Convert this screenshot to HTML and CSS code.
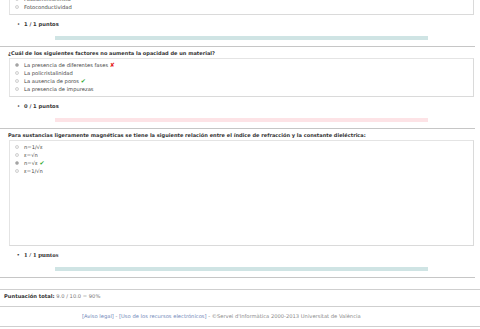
FILE: index.html
```html
<!DOCTYPE html>
<html lang="es">
  <head>
    <meta charset="UTF-8" />
    <meta name="viewport" content="width=device-width, initial-scale=1.0" />
    <title>Resultados</title>
    <link rel="stylesheet" href="styles.css">
  </head>
  <body>
    <div class="quiz">
      <div class="question first">
        <div class="options">
          <div class="option"><span class="radio"></span>Fotoluminiscencia</div>
          <div class="option"><span class="radio"></span>Fotoconductividad</div>
        </div>
        <div class="score"><span class="dot">•</span>1 / 1 puntos</div>
        <div class="bar ok"></div>
      </div>

      <div class="question">
        <div class="title">¿Cuál de los siguientes factores no aumenta la opacidad de un material?</div>
        <div class="options">
          <div class="option"><span class="radio checked"></span>La presencia de diferentes fases <span class="wrong">✘</span></div>
          <div class="option"><span class="radio"></span>La policristalinidad</div>
          <div class="option"><span class="radio"></span>La ausencia de poros <span class="right">✔</span></div>
          <div class="option"><span class="radio"></span>La presencia de impurezas</div>
        </div>
        <div class="score"><span class="dot">•</span>0 / 1 puntos</div>
        <div class="bar bad"></div>
      </div>

      <div class="question">
        <div class="title">Para sustancias ligeramente magnéticas se tiene la siguiente relación entre el índice de refracción y la constante dieléctrica:</div>
        <div class="options tall">
          <div class="option"><span class="radio"></span>n=1/√ε</div>
          <div class="option"><span class="radio"></span>ε=√n</div>
          <div class="option"><span class="radio checked"></span>n=√ε <span class="right">✔</span></div>
          <div class="option"><span class="radio"></span>ε=1/√n</div>
        </div>
        <div class="score serif"><span class="dot">•</span>1 / 1 puntos</div>
        <div class="bar ok"></div>
      </div>
    </div>

    <div class="total"><b>Puntuación total:</b> 9.0 / 10.0 = 90%</div>

    <div class="footer">
      <a href="#">[Aviso legal]</a> - <a href="#">[Uso de los recursos electrónicos]</a> - ©Servei d'Informàtica 2000-2013 Universitat de València
    </div>
  </body>
</html>
```

FILE: styles.css
```css
* {
  margin: 0;
  padding: 0;
  box-sizing: border-box;
}

body {
  font-family: "DejaVu Sans", Verdana, sans-serif;
  font-size: 5.2px;
  color: #444;
  background-color: #fff;
  overflow: hidden;
}

.quiz {
  width: 475px;
}

.question {
  border-bottom: 1px solid #c6c6c6;
  padding-bottom: 6px;
}

.question.first {
  margin-top: -8px;
}

.title {
  font-weight: bold;
  font-size: 5.05px;
  color: #333;
  line-height: 8px;
  padding: 2px 0 0 8px;
  margin-bottom: 1px;
}

.options {
  margin-left: 9px;
  margin-right: 1px;
  border: 1px solid #e4e4e4;
  border-right-color: #dadada;
  border-bottom-color: #dadada;
  padding: 2px 0 3px 5px;
}

.options.tall {
  height: 106px;
}

.option {
  display: flex;
  align-items: center;
  line-height: 8px;
  height: 8px;
  white-space: pre;
}

.radio {
  width: 4px;
  height: 4px;
  border-radius: 50%;
  border: 1px solid #d2d2d2;
  background-color: #f4f4f4;
  margin-right: 5px;
  flex-shrink: 0;
}

.radio.checked {
  background-color: #999;
  border-color: #c0c0c0;
}

.wrong {
  color: #e42020;
  font-size: 6px;
  font-weight: bold;
}

.right {
  color: #33aa33;
  font-size: 6px;
}

.score {
  font-weight: bold;
  color: #333;
  line-height: 8px;
  margin-top: 5px;
  padding-left: 17px;
}

.score.serif {
  font-family: "Liberation Serif", serif;
  font-size: 7px;
}

.dot {
  display: inline-block;
  width: 7px;
  font-weight: normal;
}

.bar {
  height: 4px;
  margin: 8px 47px 0 55px;
}

.bar.ok {
  background-color: #cfe4e4;
}

.bar.bad {
  background-color: #fde3e6;
}

.total {
  margin-top: 11px;
  border-top: 1px solid #cfcfcf;
  border-bottom: 1px solid #cfcfcf;
  padding: 2px 4px 6px;
  line-height: 8px;
  color: #777;
}

.total b {
  color: #333;
}

.footer {
  border-bottom: 1px solid #cfcfcf;
  line-height: 19px;
  padding-left: 82px;
  color: #8a8a8a;
}

.footer a {
  color: #7088b8;
  text-decoration: none;
}
```
